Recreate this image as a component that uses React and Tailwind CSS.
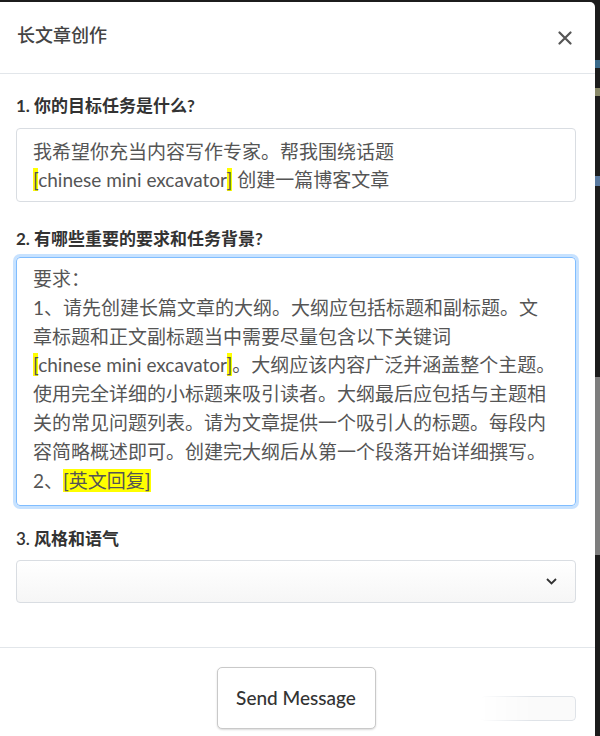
const mark = "bg-[#ffff00]";

function Hl({ children }) {
  return <span className={mark}>{children}</span>;
}

const lines = [
  <>要求：</>,
  <>1、请先创建长篇文章的大纲。大纲应包括标题和副标题。文</>,
  <>章标题和正文副标题当中需要尽量包含以下关键词</>,
  <>
    <Hl>[</Hl>chinese mini excavator<Hl>]</Hl>。大纲应该内容广泛并涵盖整个主题。
  </>,
  <>使用完全详细的小标题来吸引读者。大纲最后应包括与主题相</>,
  <>关的常见问题列表。请为文章提供一个吸引人的标题。每段内</>,
  <>容简略概述即可。创建完大纲后从第一个段落开始详细撰写。</>,
  <>
    2、<Hl>[英文回复]</Hl>
  </>,
];

function Label({ children, className = "" }) {
  return (
    <div className={`text-[17px] leading-[24px] font-bold text-[#333] ${className}`}>{children}</div>
  );
}

export default function App() {
  return (
    <div className="flex h-[736px] w-[600px] overflow-hidden bg-[#1c1c1c] font-['Lato','Noto_Sans_CJK_SC',sans-serif]">
      <div className="mt-[2px] flex w-[595px] shrink-0 flex-col rounded-tr-[5px] bg-white">
        <div className="flex h-[72px] items-center justify-between border-b border-[#e2e6ea] pb-[4px] pl-[17px] pr-[23px]">
          <span className="text-[18px] font-medium text-[#444]">长文章创作</span>
          <svg width="14" height="14" viewBox="0 0 14 14" className="mt-[4px]">
            <path d="M1.5 1.5 L12.5 12.5 M12.5 1.5 L1.5 12.5" stroke="#555" strokeWidth="2.2" strokeLinecap="round" />
          </svg>
        </div>

        <div className="pb-[44px] pl-[16px] pr-[19px] pt-[20px]">
          <Label>1. 你的目标任务是什么?</Label>
          <div className="mt-[10px] h-[74px] rounded-[4px] border border-[#d9dde2] px-[16px] pt-[9px] text-[19px] leading-[28px] text-[#555]">
            <div className="whitespace-nowrap">我希望你充当内容写作专家。帮我围绕话题</div>
            <div className="whitespace-nowrap">
              <Hl>[</Hl>chinese mini excavator<Hl>]</Hl> 创建一篇博客文章
            </div>
          </div>

          <Label className="mt-[25px]">2. 有哪些重要的要求和任务背景?</Label>
          <div className="mt-[6px] h-[249px] rounded-[4px] border border-[#80bdff] px-[16px] pt-[7px] text-[19px] leading-[28.8px] text-[#555] shadow-[0_0_0_3px_rgba(0,123,255,0.22)]">
            {lines.map((l, i) => (
              <div key={i} className="whitespace-nowrap">
                {l}
              </div>
            ))}
          </div>

          <div className="mt-[21px] text-[17px] leading-[24px] font-semibold text-[#333]">3. 风格和语气</div>
          <div className="mt-[9px] flex h-[43px] items-center justify-end rounded-[4px] border border-[#d9dde2] bg-linear-to-b from-white to-[#f6f6f6] pr-[18px]">
            <svg width="11" height="7" viewBox="0 0 11 7">
              <path d="M1 1 L5.5 5.5 L10 1" fill="none" stroke="#333" strokeWidth="1.8" />
            </svg>
          </div>
        </div>

        <div className="grid grid-cols-[1fr_auto_1fr] border-t border-[#e2e6ea] pl-[16px] pr-[19px] pt-[19px]">
          <div />
          <button className="h-[62px] w-[159px] rounded-[5px] border border-[#c9c9c9] bg-white text-[19px] font-medium text-[#333] shadow-[0_1px_2px_rgba(0,0,0,0.15)]">
            Send Message
          </button>
          <div className="flex justify-end">
            <div className="mt-[29px] h-[25px] w-[96px] rounded-[4px] border border-[#dfe3e8] bg-[#fafafa] [mask-image:linear-gradient(to_right,transparent,black_55%)]" />
          </div>
        </div>
      </div>

      <div className="flex w-[5px] flex-col">
        <div className="h-[60px] bg-[#1c1c1c]" />
        <div className="h-[8px] bg-[#3a6a8a]" />
        <div className="h-[20px] bg-[#1c1c1c]" />
        <div className="h-[8px] bg-[#8a8a6a]" />
        <div className="h-[80px] bg-[#1c1c1c]" />
        <div className="h-[10px] bg-[#5a7aa0]" />
        <div className="h-[191px] bg-[#1c1c1c]" />
        <div className="h-[178px] bg-[#7d7d7d]" />
        <div className="flex-1 bg-[#1c1c1c]" />
      </div>
    </div>
  );
}
